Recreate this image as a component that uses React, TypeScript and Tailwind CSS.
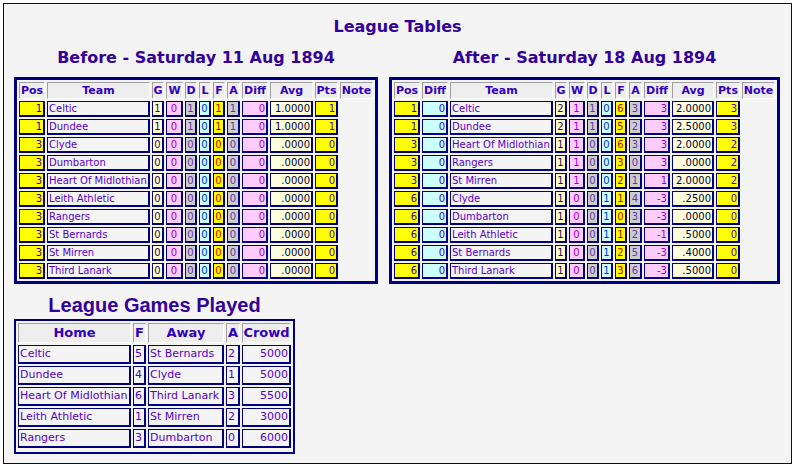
import React from 'react';

type Row = (string | number)[];

// column styles for the league tables: bg / text colour / align
const beforeCols = [
  'bg-[#ffff00] text-[#330099] text-right',
  'bg-[#f4f4f4] text-[#5500cc] text-left',
  'bg-[#ffffcc] text-[#330066] text-center',
  'bg-[#ffccff] text-[#9900cc] text-center',
  'bg-[#cccccc] text-[#6633aa] text-center',
  'bg-[#ccffff] text-[#0033cc] text-center',
  'bg-[#ffff00] text-[#cc0000] text-center',
  'bg-[#cccccc] text-[#6633aa] text-center',
  'bg-[#ffccff] text-[#9900cc] text-right',
  'bg-[#ffffdd] text-[#000033] text-right',
  'bg-[#ffff00] text-[#5500cc] text-right',
];

const afterCols = [
  'bg-[#ffff00] text-[#330099] text-right',
  'bg-[#ccffff] text-[#3300cc] text-right',
  ...beforeCols.slice(1),
];

const beforeWidths = ['w-[26px]', 'w-[103px]', 'w-[12px]', 'w-[17px]', 'w-[12px]', 'w-[12px]', 'w-[12px]', 'w-[13px]', 'w-[26px]', 'w-[43px]', 'w-[23px]', 'w-[33px]'];
const afterWidths = ['w-[26px]', 'w-[26px]', 'w-[103px]', 'w-[12px]', 'w-[16px]', 'w-[12px]', 'w-[12px]', 'w-[12px]', 'w-[13px]', 'w-[26px]', 'w-[42px]', 'w-[24px]', 'w-[33px]'];

const before: Row[] = [
  [1, 'Celtic', 1, 0, 1, 0, 1, 1, 0, '1.0000', 1],
  [1, 'Dundee', 1, 0, 1, 0, 1, 1, 0, '1.0000', 1],
  [3, 'Clyde', 0, 0, 0, 0, 0, 0, 0, '.0000', 0],
  [3, 'Dumbarton', 0, 0, 0, 0, 0, 0, 0, '.0000', 0],
  [3, 'Heart Of Midlothian', 0, 0, 0, 0, 0, 0, 0, '.0000', 0],
  [3, 'Leith Athletic', 0, 0, 0, 0, 0, 0, 0, '.0000', 0],
  [3, 'Rangers', 0, 0, 0, 0, 0, 0, 0, '.0000', 0],
  [3, 'St Bernards', 0, 0, 0, 0, 0, 0, 0, '.0000', 0],
  [3, 'St Mirren', 0, 0, 0, 0, 0, 0, 0, '.0000', 0],
  [3, 'Third Lanark', 0, 0, 0, 0, 0, 0, 0, '.0000', 0],
];

const after: Row[] = [
  [1, 0, 'Celtic', 2, 1, 1, 0, 6, 3, 3, '2.0000', 3],
  [1, 0, 'Dundee', 2, 1, 1, 0, 5, 2, 3, '2.5000', 3],
  [3, 0, 'Heart Of Midlothian', 1, 1, 0, 0, 6, 3, 3, '2.0000', 2],
  [3, 0, 'Rangers', 1, 1, 0, 0, 3, 0, 3, '.0000', 2],
  [3, 0, 'St Mirren', 1, 1, 0, 0, 2, 1, 1, '2.0000', 2],
  [6, 0, 'Clyde', 1, 0, 0, 1, 1, 4, -3, '.2500', 0],
  [6, 0, 'Dumbarton', 1, 0, 0, 1, 0, 3, -3, '.0000', 0],
  [6, 0, 'Leith Athletic', 1, 0, 0, 1, 1, 2, -1, '.5000', 0],
  [6, 0, 'St Bernards', 1, 0, 0, 1, 2, 5, -3, '.4000', 0],
  [6, 0, 'Third Lanark', 1, 0, 0, 1, 3, 6, -3, '.5000', 0],
];

const games = [
  ['Celtic', 5, 'St Bernards', 2, 5000],
  ['Dundee', 4, 'Clyde', 1, 5000],
  ['Heart Of Midlothian', 6, 'Third Lanark', 3, 5500],
  ['Leith Athletic', 1, 'St Mirren', 2, 3000],
  ['Rangers', 3, 'Dumbarton', 0, 6000],
];
const gameWidths = ['w-[113px]', 'w-[13px]', 'w-[76px]', 'w-[14px]', 'w-[49px]'];

const th =
  'bg-[#eeeeee] border border-t-[#a0a0a0] border-l-[#a0a0a0] border-b-[#ffffff] border-r-[#ffffff] p-0 text-[11px] leading-[15px] font-bold text-[#3300bb] text-center whitespace-nowrap';
const td =
  'border-[#000080] border-t border-l border-b-2 border-r-2 px-[1px] text-[10px] leading-[11px] h-[16px] whitespace-nowrap';

function LeagueTable({ heads, cols, widths, rows }: { heads: string[]; cols: string[]; widths: string[]; rows: Row[] }) {
  return (
    <table className="border-separate border-spacing-[2px] border-[3px] border-[#000080]">
      <thead>
        <tr>
          {heads.map((h, i) => (
            <th key={i} className={`${th} ${widths[i]}`}>{h}</th>
          ))}
        </tr>
      </thead>
      <tbody>
        {rows.map((r, i) => (
          <tr key={i}>
            {r.map((v, j) => (
              <td key={j} className={`${td} ${cols[j]}`}>{v}</td>
            ))}
            <td />
          </tr>
        ))}
      </tbody>
    </table>
  );
}

export default function App() {
  return (
    <div className="bg-white p-[3px] w-[794px] h-[466px] font-['DejaVu_Sans',Verdana,sans-serif]">
      <div className="w-[789px] h-[461px] border border-[#000080] bg-[#f4f4f4] pt-[13px] px-[10px]">
        <div className="text-center text-[16px] leading-[20px] font-bold text-[#330099]">League Tables</div>
        <div className="flex gap-[11px] mt-[11px]">
          <div className="flex flex-col items-center">
            <div className="text-[16px] leading-[20px] font-bold text-[#330099] mb-[9px]">Before - Saturday 11 Aug 1894</div>
            <LeagueTable
              heads={['Pos', 'Team', 'G', 'W', 'D', 'L', 'F', 'A', 'Diff', 'Avg', 'Pts', 'Note']}
              cols={beforeCols}
              widths={beforeWidths}
              rows={before}
            />
          </div>
          <div className="flex flex-col items-center">
            <div className="text-[16px] leading-[20px] font-bold text-[#330099] mb-[9px]">After - Saturday 18 Aug 1894</div>
            <LeagueTable
              heads={['Pos', 'Diff', 'Team', 'G', 'W', 'D', 'L', 'F', 'A', 'Diff', 'Avg', 'Pts', 'Note']}
              cols={afterCols}
              widths={afterWidths}
              rows={after}
            />
          </div>
        </div>
        <div className="inline-flex flex-col items-center mt-[10px]">
          <div className="font-['Liberation_Sans',Arial,sans-serif] text-[20px] leading-[22px] font-bold text-[#330099]">
            League Games Played
          </div>
          <table className="mt-[3px] border-separate border-spacing-[2px] border-2 border-[#000080] pb-[2px]">
            <thead>
              <tr>
                {['Home', 'F', 'Away', 'A', 'Crowd'].map((h, i) => (
                  <th
                    key={h}
                    className={`${gameWidths[i]} bg-[#eeeeee] border border-t-[#a0a0a0] border-l-[#a0a0a0] border-b-[#ffffff] border-r-[#ffffff] p-0 text-[13px] leading-[18px] font-bold text-[#3300bb] text-center whitespace-nowrap`}
                  >
                    {h}
                  </th>
                ))}
              </tr>
            </thead>
            <tbody>
              {games.map((g, i) => (
                <tr key={i}>
                  {g.map((v, j) => (
                    <td
                      key={j}
                      className={`border-[#000080] border-t border-l border-b-2 border-r-2 px-[1px] text-[11px] leading-[16px] text-[#5500cc] whitespace-nowrap ${
                        j === 4 ? 'text-right' : 'text-left'
                      }`}
                    >
                      {v}
                    </td>
                  ))}
                </tr>
              ))}
            </tbody>
          </table>
        </div>
      </div>
    </div>
  );
}
